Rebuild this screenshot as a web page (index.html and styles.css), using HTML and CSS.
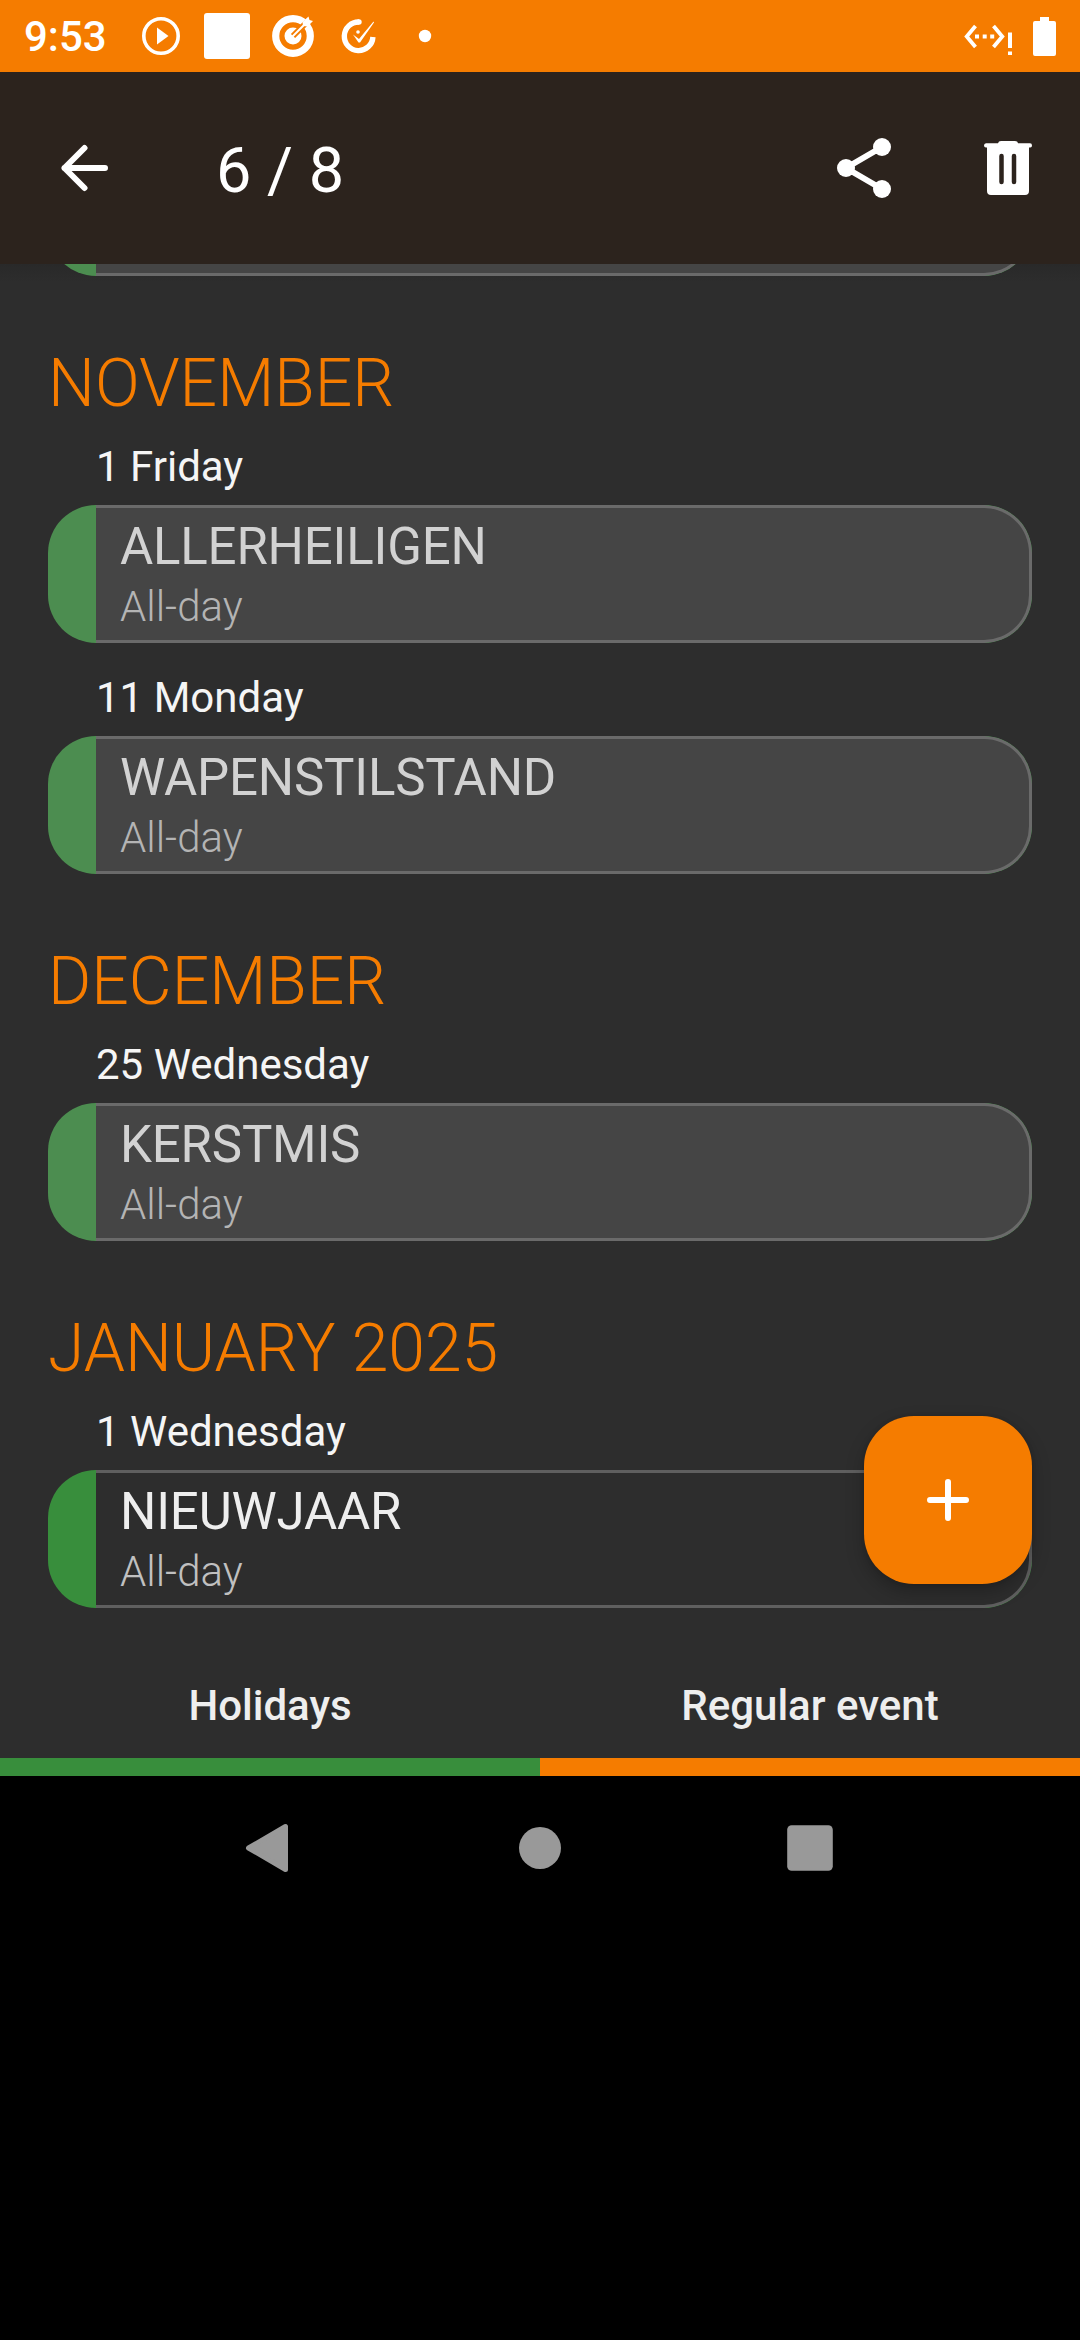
FILE: index.html
```html
<!DOCTYPE html>
<html lang="en">
<head>
<meta charset="utf-8">
<title>Holidays</title>
<link rel="stylesheet" href="styles.css">
</head>
<body>
<div class="screen">
  <header class="status">
    <span class="clock">9:53</span>
    <div class="notifications">
      <svg viewBox="0 0 66 72"><circle cx="33" cy="36" r="17.2" fill="none" stroke="#fff" stroke-width="3.6"/><path d="M29 27.5 40.5 36 29 44.5z" fill="#fff"/></svg>
      <svg viewBox="0 0 66 72"><rect x="10" y="13" width="46" height="46" rx="3" fill="#fff"/></svg>
      <svg viewBox="0 0 66 72"><circle cx="33" cy="36" r="17.3" fill="none" stroke="#fff" stroke-width="7.2"/><circle cx="33" cy="36" r="8.5" fill="#fff"/><path d="M33 36 47 22" stroke="#f57c00" stroke-width="6"/><path d="M32 37 46 23" stroke="#fff" stroke-width="2"/><path d="M43 26 42.5 22 48.500 16.500 49.500 20 53 21 47.500 26.500z" fill="#fff"/></svg>
      <svg viewBox="0 0 66 72"><path d="M33 22A14.300 14.300 0 1 0 46.900 37" fill="none" stroke="#fff" stroke-width="5.400"/><circle cx="33" cy="22" r="2.700" fill="#fff"/><path d="M27 34.500 33 39 47.500 21.500 48 22.500 34 42.500 32.500 42.500z" fill="#fff"/><circle cx="32" cy="32" r="1.800" fill="#fff"/></svg>
      <svg viewBox="0 0 66 72"><circle cx="33" cy="36" r="6.200" fill="#fff"/></svg>
    </div>
    <svg class="network" viewBox="0 0 49 72"><path d="M11.500 26 2.700 36.500 11.500 47M29.500 26 38.300 36.500 29.500 47" fill="none" stroke="#fff" stroke-width="3.800"/><path d="M11 34.500h4v4h-4zM18.700 34.500h4v4h-4zM26.200 34.500h4v4h-4zM44 32.500h4v15.500h-4zM44 51.500h4v3.500h-4z" fill="#fff"/></svg>
    <svg class="battery" viewBox="0 0 23 39"><path d="M7 0h9v4h5q2 0 2 2v31q0 2-2 2H2q-2 0-2-2V6q0-2 2-2h5z" fill="#fff"/></svg>
  </header>

  <nav class="appbar">
    <svg class="back" viewBox="0 0 48 48"><path d="M24.500 4 4.500 24 24.500 44M4.500 24H45" fill="none" stroke="#fff" stroke-width="6" stroke-linecap="round" stroke-linejoin="round"/></svg>
    <h1 class="title">6 / 8</h1>
    <svg class="share" viewBox="0 0 54 60"><path d="M45 9 9 30 45 51" fill="none" stroke="#fff" stroke-width="6"/><circle cx="45" cy="9" r="9" fill="#fff"/><circle cx="9" cy="30" r="9" fill="#fff"/><circle cx="45" cy="51" r="9" fill="#fff"/></svg>
    <svg class="trash" viewBox="0 0 48 54"><path d="M2 2.300H14Q14.500 0 17 0H31Q33.500 0 34 2.300H46Q48 2.300 48 4.500T46 6.500H45V50q0 4-4 4H7q-4 0-4-4V6.500H2Q0 6.500 0 4.500T2 2.300z" fill="#fff"/><path d="M17.500 15V41M30 15V41" stroke="#2c231d" stroke-width="4.500" stroke-linecap="round"/></svg>
  </nav>

  <main class="events">
    <article class="card past peek"><div class="body"></div></article>

    <h2 class="month">NOVEMBER</h2>
    <p class="day">1 Friday</p>
    <article class="card past"><div class="body"><h3 class="name">ALLERHEILIGEN</h3><p class="time">All-day</p></div></article>
    <p class="day next">11 Monday</p>
    <article class="card past"><div class="body"><h3 class="name">WAPENSTILSTAND</h3><p class="time">All-day</p></div></article>

    <h2 class="month">DECEMBER</h2>
    <p class="day">25 Wednesday</p>
    <article class="card past"><div class="body"><h3 class="name">KERSTMIS</h3><p class="time">All-day</p></div></article>

    <h2 class="month">JANUARY 2025</h2>
    <p class="day">1 Wednesday</p>
    <article class="card"><div class="body"><h3 class="name">NIEUWJAAR</h3><p class="time">All-day</p></div></article>

    <button class="add" aria-label="Add event"><svg viewBox="0 0 42 42"><path d="M21 3V39M3 21H39" stroke="#fff" stroke-width="6" stroke-linecap="round"/></svg></button>
  </main>

  <footer class="legend">
    <span class="kind holidays">Holidays</span>
    <span class="kind regular">Regular event</span>
  </footer>

  <div class="system">
    <svg viewBox="0 0 60 60"><path d="M8.500 30 45.500 8.500V51.500z" fill="#999" stroke="#999" stroke-width="5" stroke-linejoin="round"/></svg>
    <svg viewBox="0 0 60 60"><circle cx="30" cy="30" r="21" fill="#999"/></svg>
    <svg viewBox="0 0 60 60"><rect x="7.200" y="7.200" width="45.600" height="45.600" rx="4.500" fill="#999"/></svg>
  </div>
</div>
</body>
</html>
```

FILE: styles.css
```css
* { box-sizing: border-box; }
body, h1, h2, h3, p { margin: 0; }
body { background: #000; font-family: Roboto, sans-serif; color: #eee; }
svg { display: block; flex: none; }

.screen { display: flex; flex-direction: column; width: 1080px; height: 2340px; overflow: hidden; }

.status { display: flex; align-items: center; height: 72px; padding: 0 24px; background: #f57c00; color: #fff; }
.clock { width: 104px; font-size: 42px; font-weight: 500; line-height: 50px; padding-top: 2px; white-space: nowrap; }
.notifications { display: flex; margin-right: auto; }
.notifications svg { width: 66px; height: 72px; }
.network { width: 49px; height: 72px; margin-right: 20px; }
.battery { width: 23px; height: 39px; }

.appbar { display: flex; align-items: center; height: 192px; padding: 0 48px 0 60px; background: #2c231d; color: #fff; }
.back { width: 48px; height: 48px; }
.title { margin: 5px auto 0 108px; font-size: 63px; font-weight: 400; line-height: 74px; }
.share { width: 54px; height: 60px; margin-right: 93px; }
.trash { width: 48px; height: 54px; }

.events { position: relative; height: 1398px; padding: 0 48px; overflow: hidden; background: linear-gradient(#292929, #2d2d2d 18px); }
.month { margin: 69px 0 19px; font-size: 66px; font-weight: 300; line-height: 78px; color: #f57c00; }
.day { margin: 0 0 13px 48px; font-size: 42px; line-height: 50px; color: #f5f5f5; }
.day.next { margin-top: 30px; }

.card { display: flex; height: 138px; border-radius: 48px; background: #388e3c; overflow: hidden; }
.card .body { flex: 1; margin-left: 48px; padding: 9px 0 0 24px; border: 3px solid #5f5f5f; border-left: 0; border-radius: 0 48px 48px 0; background: #2d2d2d; }
.name { font-size: 51px; font-weight: 400; line-height: 60px; letter-spacing: -.2px; color: #eee; }
.time { margin-top: 5px; font-size: 42px; font-weight: 300; line-height: 50px; color: #c0c0c0; }
.past { background: #4c8d50; }
.past .body { background: #454545; border-color: #6a6a6a; }
.past .name { color: #d2d2d2; }
.past .time { color: #b4b4b4; }
.peek { margin-top: -126px; }

/* The button floats over the last card of the list. */
.add { position: absolute; right: 48px; bottom: 78px; display: grid; place-items: center; width: 168px; height: 168px; padding: 0; border: 0; border-radius: 50px; background: #f57c00; box-shadow: 0 8px 18px rgba(0, 0, 0, .25), 0 0 4px rgba(0, 0, 0, .12); }
.add svg { width: 42px; height: 42px; }

.legend { display: grid; grid-template-columns: 1fr 1fr; height: 114px; background: #2d2d2d; }
.kind { padding-top: 19px; border-bottom: 18px solid #f57c00; text-align: center; font-size: 42px; font-weight: 500; line-height: 50px; }
.holidays { border-color: #388e3c; }

.system { display: flex; justify-content: center; gap: 210px; padding-top: 42px; }
.system svg { width: 60px; height: 60px; }
```
